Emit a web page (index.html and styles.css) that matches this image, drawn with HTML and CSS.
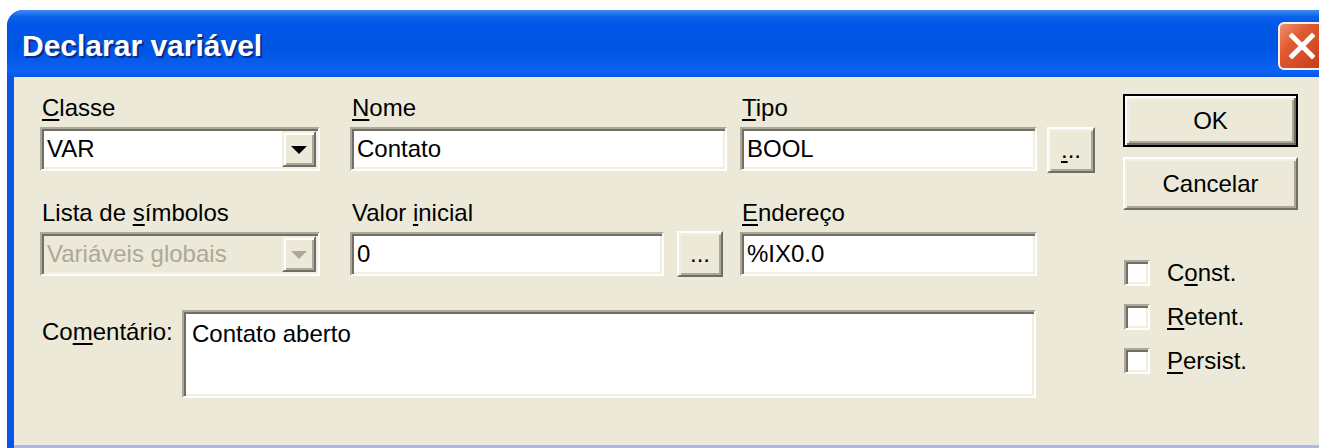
FILE: index.html
```html
<!DOCTYPE html>
<html lang="pt">
<head>
<meta charset="utf-8">
<title>Declarar variável</title>
<link rel="stylesheet" href="styles.css">
</head>
<body>
<div class="window">
  <div class="titlebar">
    <span class="title">Declarar variável</span>
    <span class="close">
      <svg width="26" height="26" viewBox="0 0 26 26"><path d="M3 3 L23 23 M23 3 L3 23" stroke="#fff" stroke-width="5" stroke-linecap="square" fill="none"/></svg>
    </span>
  </div>
  <div class="frame">
    <div class="client">
      <div class="form">
        <div class="row">
          <div class="field c1">
            <label class="lbl"><u>C</u>lasse</label>
            <div class="combo sunken">
              <span class="combo-text">VAR</span>
              <span class="drop"><span class="arrow"></span></span>
            </div>
          </div>
          <div class="field c2">
            <label class="lbl"><u>N</u>ome</label>
            <div class="edit sunken">Contato</div>
          </div>
          <div class="field c3">
            <label class="lbl"><u>T</u>ipo</label>
            <div class="with-btn">
              <div class="edit sunken w-tipo">BOOL</div>
              <div class="btn dots tipo-btn"><u>.</u>..</div>
            </div>
          </div>
        </div>
        <div class="row row2">
          <div class="field c1">
            <label class="lbl">Lista de <u>s</u>ímbolos</label>
            <div class="combo sunken disabled">
              <span class="combo-text">Variáveis globais</span>
              <span class="drop"><span class="arrow"></span></span>
            </div>
          </div>
          <div class="field c2">
            <label class="lbl">Valor <u>i</u>nicial</label>
            <div class="with-btn gap13">
              <div class="edit sunken w-valor">0</div>
              <div class="btn dots valor-btn">...</div>
            </div>
          </div>
          <div class="field c3">
            <label class="lbl"><u>E</u>ndereço</label>
            <div class="edit sunken w-tipo">%IX0.0</div>
          </div>
        </div>
        <div class="comment-row">
          <label class="lbl comment-lbl">Co<u>m</u>entário:</label>
          <div class="memo sunken">Contato aberto</div>
        </div>
      </div>
      <div class="side">
        <div class="btn big default">OK</div>
        <div class="btn big">Cancelar</div>
        <div class="checks">
          <label class="check"><span class="box sunken"></span><span>C<u>o</u>nst.</span></label>
          <label class="check"><span class="box sunken"></span><span><u>R</u>etent.</span></label>
          <label class="check"><span class="box sunken"></span><span><u>P</u>ersist.</span></label>
        </div>
      </div>
    </div>
  </div>
</div>
</body>
</html>
```

FILE: styles.css
```css
html, body {
  margin: 0;
  background: #fff;
  overflow: hidden;
}

body {
  font-family: "Liberation Sans", Arial, sans-serif;
  font-size: 24px;
  color: #000;
}

u {
  text-decoration-thickness: 2px;
  text-underline-offset: 3px;
}

/* window shell */
.window {
  margin: 10px 0 0 7px;
  width: 1330px;
  height: 438px;
  display: flex;
  flex-direction: column;
  border-radius: 16px 16px 0 0;
  overflow: hidden;
  background: #0a55e4;
}

.titlebar {
  flex: none;
  height: 67px;
  box-sizing: border-box;
  display: flex;
  justify-content: space-between;
  align-items: flex-start;
  padding: 0 11px 0 15px;
  background: linear-gradient(to bottom,
    #3f8cf3 0px, #2a78ef 3px, #0b60ea 7px, #0058e6 14px,
    #0054e3 40px, #085cec 52px, #0c62f2 60px, #0758ea 66px,
    #0049d6 70px, #003fca 73px, #0c48cc 76px, #0c48cc 100%);
}

.title {
  margin-top: 21px;
  font: bold 30px/30px "Liberation Sans", Arial, sans-serif;
  color: #fff;
  text-shadow: 2px 2px 0 #0b2a8a;
  white-space: nowrap;
}

.close {
  margin-top: 12px;
  width: 48px;
  height: 48px;
  box-sizing: border-box;
  border: 2px solid #f4f0ee;
  border-radius: 6px;
  background: linear-gradient(135deg, #ef9170 0%, #e05a30 35%, #d24a22 70%, #c43d17 100%);
  display: flex;
  align-items: center;
  justify-content: center;
}

.close svg {
  display: block;
}

.frame {
  flex: 1;
  display: flex;
  border-left: 7px solid #0b56e6;
}

.client {
  flex: 1;
  display: flex;
  padding-left: 26px;
  background: #ece9d8;
  border-bottom: 3px solid #aabbe6;
}

/* 3D edges */
.sunken {
  box-sizing: border-box;
  border: 2px solid;
  border-color: #aca899 #fff #fff #aca899;
  box-shadow: inset 2px 2px #716f64, inset -2px -2px #f1efe2;
  background: #fff;
}

.btn {
  box-sizing: border-box;
  display: flex;
  align-items: center;
  justify-content: center;
  background: #ece9d8;
  border: 2px solid;
  border-color: #fff #716f64 #716f64 #fff;
  box-shadow: inset 2px 2px #f1efe2, inset -2px -2px #aca899;
  white-space: nowrap;
}

.btn.default {
  border-color: #000;
  box-shadow: inset 2px 2px #fff, inset -2px -2px #716f64,
              inset 4px 4px #f1efe2, inset -4px -4px #aca899;
}

/* form area */
.form {
  width: 1055px;
  flex: none;
  padding-top: 18px;
}

.row {
  display: flex;
}

.row2 {
  margin-top: 27px;
}

.c1 { width: 280px; }
.c2 { width: 377px; margin-left: 30px; }
.c3 { width: 355px; margin-left: 13px; }

.lbl {
  display: block;
  height: 26px;
  line-height: 26px;
  padding-left: 2px;
  margin-bottom: 6px;
  white-space: nowrap;
}

.edit {
  height: 44px;
  line-height: 40px;
  padding: 0 5px;
  white-space: nowrap;
  overflow: hidden;
}

.w-tipo { width: 297px; flex: none; }
.w-valor { width: 314px; flex: none; }

.with-btn {
  display: flex;
  align-items: flex-start;
  gap: 10px;
}

.with-btn.gap13 { gap: 13px; }

.dots {
  height: 46px;
  line-height: 1;
}

.tipo-btn { width: 48px; }
.valor-btn { width: 46px; margin-top: -1px; }

.combo {
  height: 44px;
  display: flex;
  align-items: center;
}

.combo-text {
  flex: 1;
  padding-left: 5px;
  line-height: 40px;
  white-space: nowrap;
  overflow: hidden;
}

.drop {
  flex: none;
  width: 34px;
  height: 36px;
  margin-right: 2px;
  box-sizing: border-box;
  display: flex;
  align-items: center;
  justify-content: center;
  background: #ece9d8;
  border: 2px solid;
  border-color: #f1efe2 #716f64 #716f64 #f1efe2;
  box-shadow: inset 2px 2px #fff, inset -2px -2px #aca899;
}

.arrow {
  width: 0;
  height: 0;
  margin-top: 2px;
  border-left: 8px solid transparent;
  border-right: 8px solid transparent;
  border-top: 8px solid #000;
}

.combo.disabled {
  background: #ece9d8;
}

.combo.disabled .combo-text {
  color: #aca899;
}

.combo.disabled .arrow {
  border-top-color: #aca899;
}

.comment-row {
  margin-top: 33px;
  display: flex;
  align-items: flex-start;
}

.comment-lbl {
  width: 142px;
  box-sizing: border-box;
  margin: 9px 0 0;
}

.memo {
  width: 854px;
  height: 88px;
  padding: 9px 8px 0;
  line-height: 26px;
}

/* right column */
.side {
  width: 175px;
  margin-left: 28px;
  padding-top: 17px;
  display: flex;
  flex-direction: column;
  gap: 10px;
}

.btn.big {
  height: 53px;
}

.checks {
  margin-top: 40px;
  display: flex;
  flex-direction: column;
  gap: 18px;
}

.check {
  display: flex;
  align-items: center;
  gap: 17px;
  height: 26px;
  padding-left: 1px;
  white-space: nowrap;
}

.box {
  width: 26px;
  height: 26px;
  flex: none;
}
```
